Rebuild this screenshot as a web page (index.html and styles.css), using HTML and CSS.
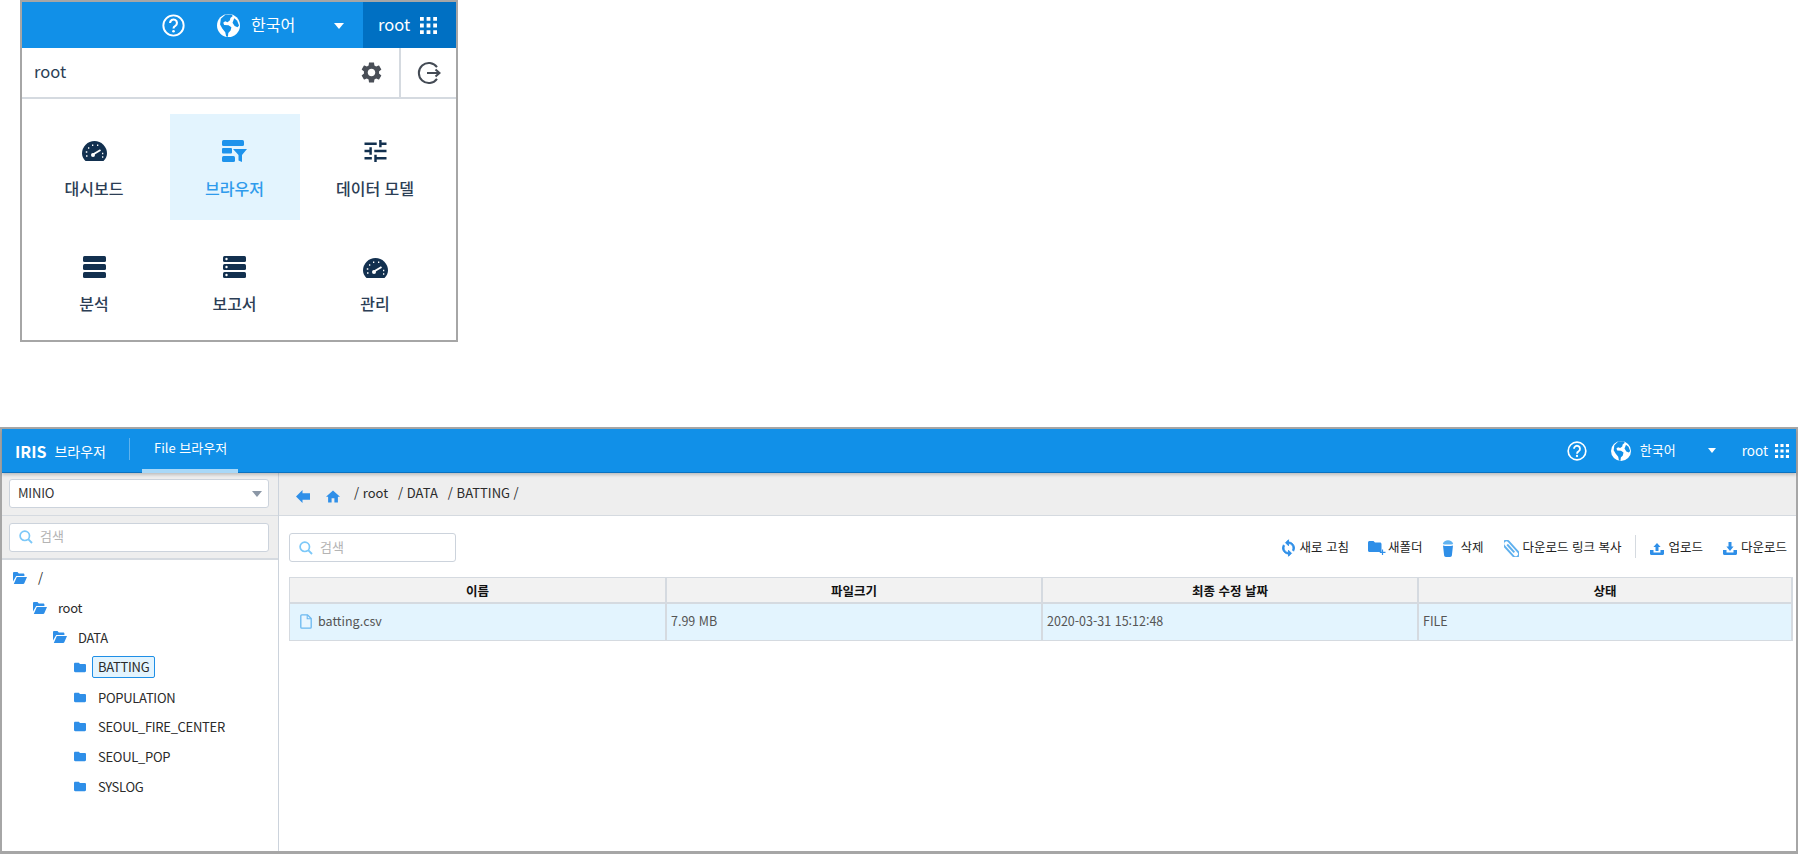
FILE: index.html
```html
<!DOCTYPE html>
<html lang="ko">

<head>
  <meta charset="UTF-8">
  <title>IRIS 브라우저</title>
  <link rel="stylesheet" href="styles.css">
</head>

<body>

  <svg class="icon-defs" aria-hidden="true">
    <symbol id="i-help" viewBox="0 0 24 24">
      <circle cx="12" cy="12" r="10.6" fill="none" stroke="#fff" stroke-width="2"/>
      <path d="M8.400 9.400a3.600 3.600 0 1 1 5.500 3c-1.300.7-1.900 1.400-1.900 2.800" fill="none" stroke="#fff" stroke-width="2.200"/>
      <circle cx="12" cy="18" r="1.400" fill="#fff"/>
    </symbol>
    <symbol id="i-globe" viewBox="0 0 24 24">
      <circle cx="12" cy="12" r="12" fill="#fff"/>
      <path d="M9 .4 15 .4l1.500 1.800-2.500 2-.5 2.300L11 8.500 8.500 7.500 6.500 9l1 2.500 4.500.3 3 2-.8 3.500-2.400 2.500-.4 4-1.800-.3-1-4.500L5.500 15 3.200 11 4 5z" fill="#1190e8"/>
      <path d="M18 4.500l3 2.500 2 5-1.600 1.800-3-1.300-2.200-3.500z" fill="#1190e8"/>
    </symbol>
    <symbol id="i-grid" viewBox="0 0 18 18">
      <path d="M0 0h4v4H0zM7 0h4v4H7zM14 0h4v4h-4zM0 7h4v4H0zM7 7h4v4H7zM14 7h4v4h-4zM0 14h4v4H0zM7 14h4v4H7zM14 14h4v4h-4z" fill="#fff"/>
    </symbol>
    <symbol id="i-gear" viewBox="2 2 20 20">
      <path d="M19.140 12.940c.04-.3.06-.61.06-.94 0-.32-.02-.64-.07-.94l2.030-1.580c.18-.14.23-.41.12-.61l-1.920-3.320c-.12-.22-.37-.29-.59-.22l-2.390.96c-.5-.38-1.030-.7-1.620-.94l-.36-2.540c-.04-.24-.24-.41-.48-.41h-3.840c-.24 0-.43.17-.47.41l-.36 2.540c-.59.24-1.130.57-1.620.94l-2.390-.96c-.22-.08-.47 0-.59.22L2.740 8.870c-.12.21-.08.47.12.61l2.030 1.580c-.05.3-.09.63-.09.94s.02.64.07.94l-2.030 1.580c-.18.14-.23.41-.12.61l1.920 3.320c.12.22.37.29.59.22l2.390-.96c.5.38 1.030.7 1.620.94l.36 2.540c.05.24.24.41.48.41h3.840c.24 0 .44-.17.47-.41l.36-2.540c.59-.24 1.130-.56 1.620-.94l2.390.96c.22.08.47 0 .59-.22l1.920-3.320c.12-.22.07-.47-.12-.61l-2.010-1.580zM12 15.600c-1.980 0-3.600-1.620-3.600-3.600s1.620-3.600 3.600-3.600 3.600 1.620 3.600 3.600-1.620 3.600-3.600 3.600z" fill="#4a4f57"/>
    </symbol>
    <symbol id="i-logout" viewBox="0 0 24 24">
      <path d="M20 6.200A10 10 0 1 0 20 17.800" fill="none" stroke="#444b55" stroke-width="2"/>
      <path d="M10 12h12.500M18.500 8.500l4 3.500-4 3.500" fill="none" stroke="#444b55" stroke-width="2"/>
    </symbol>
    <symbol id="i-gauge" viewBox="0 0 25 20">
      <path d="M3.500 20C1.300 17.800 0 15.300 0 12.500a12.500 12.500 0 0 1 25 0c0 2.800-1.300 5.300-3.500 7.500z" fill="#12304f"/>
      <path d="M11 13.500l7.500-4.500" stroke="#fff" stroke-width="2"/>
      <circle cx="11" cy="14" r="2" fill="#fff"/>
      <path d="M4 15h1.500M3.800 11h1.500M6 7h1.300M10 4.300h1.300M15 4.300h1.300M20 12.500h1.300M20 16h1.300" stroke="#fff" stroke-width="1.400"/>
    </symbol>
    <symbol id="i-browser" viewBox="0 0 25 23">
      <rect width="22" height="6" rx="1.500" fill="#1e93ec"/>
      <rect y="8" width="10" height="5.500" rx="1" fill="#1e93ec"/>
      <rect y="16" width="13" height="6" rx="1.500" fill="#1e93ec"/>
      <path d="M11 9h14l-5 6v7l-3.500-1.500V15z" fill="#1e93ec"/>
    </symbol>
    <symbol id="i-tune" viewBox="3 3 18 18">
      <path d="M3 17v2h6v-2H3zM3 5v2h10V5H3zm10 16v-2h8v-2h-8v-2h-2v6h2zM7 9v2H3v2h4v2h2V9H7zm14 4v-2H11v2h10zm-6-4h2V7h4V5h-4V3h-2v6z" fill="#12304f"/>
    </symbol>
    <symbol id="i-stack" viewBox="0 0 23 22">
      <rect width="23" height="6" rx="1.500" fill="#12304f"/>
      <rect y="8" width="23" height="6" rx="1.500" fill="#12304f"/>
      <rect y="16" width="23" height="6" rx="1.500" fill="#12304f"/>
    </symbol>
    <symbol id="i-server" viewBox="0 0 23 22">
      <rect width="23" height="6" rx="1.500" fill="#12304f"/>
      <rect y="8" width="23" height="6" rx="1.500" fill="#12304f"/>
      <rect y="16" width="23" height="6" rx="1.500" fill="#12304f"/>
      <circle cx="3.500" cy="3" r="1.200" fill="#fff"/>
      <circle cx="3.500" cy="11" r="1.200" fill="#fff"/>
      <circle cx="3.500" cy="19" r="1.200" fill="#fff"/>
    </symbol>
    <symbol id="i-search" viewBox="0 0 14 14">
      <circle cx="5.800" cy="5.800" r="4.700" fill="none" stroke="#7cc8f8" stroke-width="1.700"/>
      <path d="M9.200 9.200L13 13" stroke="#7cc8f8" stroke-width="1.900"/>
    </symbol>
    <symbol id="i-folder" viewBox="2 4 20 16">
      <path d="M10 4H4c-1.100 0-2 .9-2 2v12c0 1.100.9 2 2 2h16c1.100 0 2-.9 2-2V8c0-1.100-.9-2-2-2h-8l-2-2z" fill="#2f8fe8"/>
    </symbol>
    <symbol id="i-folder-open" viewBox="0 0 14 12">
      <path d="M0 1.200C0 .5.500 0 1.200 0h3.300l1.300 1.500h4.500c.6 0 1.100.5 1.100 1.100V4H3.200L0 9.500z" fill="#2f8fe8"/>
      <path d="M3.800 5H14l-2.700 6.200c-.2.5-.6.8-1.100.8H.8z" fill="#2f8fe8"/>
    </symbol>
    <symbol id="i-back" viewBox="0 0 14 13">
      <path d="M0 6.500L6.500 0v3.300H14v6.400H6.500V13z" fill="#2f8fe8"/>
    </symbol>
    <symbol id="i-home" viewBox="2 3 20 17">
      <path d="M10 20v-6h4v6h5v-8h3L12 3 2 12h3v8z" fill="#2f8fe8"/>
    </symbol>
    <symbol id="i-file" viewBox="0 0 12 15">
      <path d="M.8 1.800C.8 1.200 1.200.8 1.800.8h5.700l3.700 3.700v8.700c0 .6-.4 1-1 1H1.800c-.6 0-1-.4-1-1z" fill="#e9f6ff" stroke="#6bb8f0" stroke-width="1.300"/>
      <path d="M7.200 1v3.800H11" fill="none" stroke="#6bb8f0" stroke-width="1.100"/>
    </symbol>
    <symbol id="i-refresh" viewBox="3 0 18 24">
      <path d="M12 4V1L8 5l4 4V6c3.310 0 6 2.690 6 6 0 1.010-.25 1.970-.7 2.800l1.460 1.460C19.540 15.030 20 13.570 20 12c0-4.420-3.580-8-8-8zm0 14c-3.310 0-6-2.690-6-6 0-1.010.25-1.970.7-2.800L5.240 7.740C4.460 8.970 4 10.430 4 12c0 4.420 3.580 8 8 8v3l4-4-4-4v3z" fill="#2f8fe8" stroke="#2f8fe8" stroke-width="1.200"/>
    </symbol>
    <symbol id="i-newfolder" viewBox="0 0 18 14">
      <path d="M0 1.500C0 .7.700 0 1.500 0h4l1.500 1.600h5c.8 0 1.500.7 1.500 1.500V11H1.500C.7 11 0 10.300 0 9.500z" fill="#2f8fe8"/>
      <path d="M14.500 8.500v5.500M11.800 11.300h5.700" stroke="#2f8fe8" stroke-width="1.200"/>
    </symbol>
    <symbol id="i-trash" viewBox="0 0 12 17">
      <path d="M.8 4C1.500 1.500 3.500.3 6 .3s4.500 1.200 5.200 3.700c-1.500.8-9 .8-10.400 0z" fill="#62b3f0"/>
      <path d="M1 5.500c2 .7 8 .7 10 0l-1.100 9.800c-.1 1-.8 1.700-1.800 1.700H3.900c-1 0-1.700-.7-1.800-1.700z" fill="#2f8fe8"/>
    </symbol>
    <symbol id="i-clip" viewBox="0 0 14 16">
      <g fill="none" stroke="#5fb0ee" stroke-width="1.800" transform="rotate(-42 7 8)">
        <rect x="3.500" y="-1.500" width="6" height="19" rx="3"/>
        <path d="M6.500 2.500v10"/>
      </g>
    </symbol>
    <symbol id="i-upload" viewBox="0 0 14 13">
      <path d="M0 8h3.500v2.500h7V8H14v3.800c0 .7-.5 1.200-1.200 1.200H1.200C.5 13 0 12.500 0 11.800z" fill="#2f8fe8"/>
      <path d="M7 1l3.600 4H8.500v4h-3V5H3.400z" fill="#2f8fe8"/>
    </symbol>
    <symbol id="i-download" viewBox="0 0 14 13">
      <path d="M0 8h3.500v2.500h7V8H14v3.800c0 .7-.5 1.200-1.200 1.200H1.200C.5 13 0 12.500 0 11.800z" fill="#2f8fe8"/>
      <path d="M5.500 0h3v4.500h2.100L7 9 3.400 4.500h2.100z" fill="#2f8fe8"/>
    </symbol>
  </svg>

  <!-- user menu -->
  <div class="menu-card">
    <div class="menu-topbar">
      <svg class="top-help"><use href="#i-help"/></svg>
      <svg class="top-globe"><use href="#i-globe"/></svg>
      <span class="top-lang">한국어</span>
      <span class="caret caret-top"></span>
      <div class="top-user">
        <span>root</span>
        <svg class="top-grid"><use href="#i-grid"/></svg>
      </div>
    </div>
    <div class="user-row">
      <span class="user-name">root</span>
      <div class="user-gear"><svg class="gear-icon"><use href="#i-gear"/></svg></div>
      <div class="user-logout"><svg class="logout-icon"><use href="#i-logout"/></svg></div>
    </div>
    <div class="menu-grid">
      <div class="menu-item">
        <svg class="menu-icon gauge"><use href="#i-gauge"/></svg>
        <span>대시보드</span>
      </div>
      <div class="menu-item active">
        <svg class="menu-icon"><use href="#i-browser"/></svg>
        <span>브라우저</span>
      </div>
      <div class="menu-item">
        <svg class="menu-icon"><use href="#i-tune"/></svg>
        <span>데이터 모델</span>
      </div>
      <div class="menu-item lower">
        <svg class="menu-icon"><use href="#i-stack"/></svg>
        <span>분석</span>
      </div>
      <div class="menu-item lower">
        <svg class="menu-icon"><use href="#i-server"/></svg>
        <span>보고서</span>
      </div>
      <div class="menu-item lower">
        <svg class="menu-icon gauge"><use href="#i-gauge"/></svg>
        <span>관리</span>
      </div>
    </div>
  </div>

  <!-- file browser -->
  <div class="browser">
    <div class="nav">
      <span class="nav-logo">IRIS</span>
      <span class="nav-title">브라우저</span>
      <div class="nav-tab">File 브라우저</div>
      <div class="nav-right">
        <svg class="nav-help"><use href="#i-help"/></svg>
        <svg class="nav-globe"><use href="#i-globe"/></svg>
        <span class="nav-lang">한국어</span>
        <span class="caret caret-nav"></span>
        <span class="nav-user">root</span>
        <svg class="nav-grid"><use href="#i-grid"/></svg>
      </div>
    </div>

    <div class="browser-body">
      <div class="sidebar">
        <div class="side-box side-select">
          <div class="select">
            <span>MINIO</span>
            <span class="caret caret-select"></span>
          </div>
        </div>
        <div class="side-box side-search">
          <div class="search">
            <svg class="search-icon"><use href="#i-search"/></svg>
            <span>검색</span>
          </div>
        </div>
        <ul class="tree">
          <li class="lv0"><svg class="folder-open"><use href="#i-folder-open"/></svg><span>/</span></li>
          <li class="lv1"><svg class="folder-open"><use href="#i-folder-open"/></svg><span>root</span></li>
          <li class="lv2"><svg class="folder-open"><use href="#i-folder-open"/></svg><span>DATA</span></li>
          <li class="lv3"><svg class="folder"><use href="#i-folder"/></svg><span class="tree-selected">BATTING</span></li>
          <li class="lv3"><svg class="folder"><use href="#i-folder"/></svg><span>POPULATION</span></li>
          <li class="lv3"><svg class="folder"><use href="#i-folder"/></svg><span>SEOUL_FIRE_CENTER</span></li>
          <li class="lv3"><svg class="folder"><use href="#i-folder"/></svg><span>SEOUL_POP</span></li>
          <li class="lv3"><svg class="folder"><use href="#i-folder"/></svg><span>SYSLOG</span></li>
        </ul>
      </div>

      <div class="content">
        <div class="crumbs">
          <svg class="crumb-back"><use href="#i-back"/></svg>
          <svg class="crumb-home"><use href="#i-home"/></svg>
          <span class="crumb-part first">/ root</span>
          <span class="crumb-part">/ DATA</span>
          <span class="crumb-part">/ BATTING /</span>
        </div>

        <div class="content-main">
          <div class="toolbar">
            <div class="search search-main">
              <svg class="search-icon"><use href="#i-search"/></svg>
              <span>검색</span>
            </div>
            <div class="actions">
              <span class="action"><svg class="act-refresh"><use href="#i-refresh"/></svg>새로 고침</span>
              <span class="action action-folder"><svg class="act-newfolder"><use href="#i-newfolder"/></svg>새폴더</span>
              <span class="action action-trash"><svg class="act-trash"><use href="#i-trash"/></svg>삭제</span>
              <span class="action action-clip"><svg class="act-clip"><use href="#i-clip"/></svg>다운로드 링크 복사</span>
              <span class="action-sep"></span>
              <span class="action"><svg class="act-load"><use href="#i-upload"/></svg>업로드</span>
              <span class="action action-down"><svg class="act-load"><use href="#i-download"/></svg>다운로드</span>
            </div>
          </div>

          <div class="file-table">
            <div class="cell head">이름</div>
            <div class="cell head">파일크기</div>
            <div class="cell head">최종 수정 날짜</div>
            <div class="cell head">상태</div>
            <div class="cell row"><svg class="file-icon"><use href="#i-file"/></svg>batting.csv</div>
            <div class="cell row">7.99 MB</div>
            <div class="cell row">2020-03-31 15:12:48</div>
            <div class="cell row">FILE</div>
          </div>
        </div>
      </div>
    </div>
  </div>

</body>

</html>
```

FILE: styles.css
```css
html,
body {
  margin: 0;
  padding: 0;
  height: 854px;
  overflow: hidden;
  background-color: #fff;
}

body {
  font-family: "Noto Sans CJK KR", "Noto Sans", sans-serif;
  font-size: 13px;
  color: #2b2b2b;
}

.icon-defs {
  display: none;
}

svg {
  display: block;
  flex-shrink: 0;
}

.caret {
  width: 0;
  height: 0;
  border-left: 6px solid transparent;
  border-right: 6px solid transparent;
  border-top: 7px solid #fff;
}

/* user menu */
.menu-card {
  box-sizing: border-box;
  width: 438px;
  height: 342px;
  margin-left: 20px;
  border: 2px solid #a6a6a6;
  background-color: #fff;
}

.menu-topbar {
  display: flex;
  align-items: center;
  height: 46px;
  background-color: #1190e8;
  color: #fff;
}

.top-help {
  width: 23px;
  height: 23px;
  margin-left: 140px;
}

.top-globe {
  width: 23px;
  height: 23px;
  margin-left: 32px;
}

.top-lang {
  width: 44px;
  margin-left: 11px;
  font-size: 16px;
  line-height: 20px;
  margin-top: -3px;
  white-space: nowrap;
}

.caret-top {
  margin-left: 39px;
  margin-top: 2px;
  border-left-width: 5.500px;
  border-right-width: 5.500px;
  border-top-width: 6px;
}

.top-user {
  display: flex;
  align-items: center;
  align-self: stretch;
  margin-left: auto;
  width: 93px;
  background-color: #0070c3;
  font-size: 16.500px;
}

.top-user span {
  margin-left: 15px;
  margin-top: -2px;
}

.top-grid {
  width: 17px;
  height: 17px;
  margin-left: 10px;
}

.user-row {
  display: flex;
  align-items: stretch;
  height: 49px;
  border-bottom: 2px solid #d5dae0;
}

.user-name {
  margin-left: 12px;
  font-size: 16.500px;
  line-height: 46px;
  color: #2c3e55;
}

.user-gear {
  display: flex;
  align-items: center;
  margin-left: auto;
  padding-right: 17px;
  border-right: 2px solid #d5dae0;
}

.gear-icon {
  width: 21px;
  height: 21px;
}

.logout-icon {
  width: 24px;
  height: 24px;
}

.user-logout {
  display: flex;
  align-items: center;
  width: 55px;
  padding-left: 16px;
  box-sizing: border-box;
}

.menu-grid {
  display: grid;
  grid-template-columns: repeat(3, 130px);
  grid-auto-rows: 106px;
  column-gap: 10.500px;
  row-gap: 9px;
  padding: 15px 0 0 7px;
}

.menu-item {
  display: flex;
  flex-direction: column;
  align-items: center;
  padding-top: 26px;
  box-sizing: border-box;
  font-size: 16px;
  font-weight: 500;
  line-height: 24px;
  color: #2c3e55;
}

.menu-item.active {
  background-color: #e3f4fe;
  color: #2f9bec;
}

.menu-icon {
  width: 23px;
  height: 22px;
  margin-bottom: 14px;
}

.menu-item.active .menu-icon {
  width: 25px;
  height: 23px;
  margin-bottom: 13px;
}

.menu-icon.gauge {
  width: 25px;
  height: 20px;
  margin-top: 1px;
  margin-bottom: 15px;
}

.menu-item.lower {
  padding-top: 27px;
}

.menu-item.lower .menu-icon {
  margin-bottom: 13px;
}

.menu-item.lower .menu-icon.gauge {
  margin-top: 2px;
  margin-bottom: 13px;
}

/* file browser */
.browser {
  box-sizing: border-box;
  width: 1798px;
  height: 427px;
  margin-top: 85px;
  border: 2px solid #a6a6a6;
  border-bottom-width: 3px;
  background-color: #fff;
  display: flex;
  flex-direction: column;
}

.nav {
  position: relative;
  display: flex;
  align-items: center;
  flex-shrink: 0;
  height: 44px;
  box-sizing: border-box;
  background-color: #1190e8;
  color: #fff;
  border-bottom: 1px solid #0b72c0;
  box-shadow: 0 2px 3px rgba(0, 0, 0, 0.2);
}

.nav-logo {
  margin-left: 13px;
  font-size: 16px;
  font-weight: 700;
}

.nav-title {
  margin-left: 8px;
  font-size: 14px;
}

.nav-tab {
  display: flex;
  align-items: center;
  align-self: stretch;
  height: 44px;
  box-sizing: border-box;
  margin-left: 36px;
  padding: 0 11px 3px 12px;
  border-bottom: 4px solid #a8d8f8;
  font-size: 13px;
  position: relative;
}

.nav-tab::before {
  content: "";
  position: absolute;
  left: -13px;
  top: 9px;
  height: 22px;
  width: 1px;
  background-color: #5fb3ee;
}

.nav-right {
  display: flex;
  align-items: center;
  margin-left: auto;
}

.nav-help {
  width: 20px;
  height: 20px;
}

.nav-globe {
  width: 20px;
  height: 20px;
  margin-left: 24px;
}

.nav-lang {
  margin-left: 9px;
  margin-top: -3px;
  font-size: 13px;
}

.caret-nav {
  margin-left: 32px;
  border-left-width: 4.500px;
  border-right-width: 4.500px;
  border-top-width: 5px;
}

.nav-user {
  margin-left: 26px;
  margin-top: -2px;
  font-size: 13.500px;
}

.nav-grid {
  width: 14px;
  height: 14px;
  margin-left: 7px;
  margin-right: 7px;
}

.browser-body {
  display: flex;
  flex: 1;
  min-height: 0;
}

.sidebar {
  width: 276px;
  flex-shrink: 0;
  border-right: 1px solid #ccd3dc;
}

.side-box {
  background-color: #eee;
  padding: 0 9px 0 7px;
  display: flex;
  align-items: center;
}

.side-select {
  height: 43px;
  box-sizing: border-box;
  align-items: flex-start;
  padding-top: 6px;
  border-bottom: 1px solid #d5dae0;
}

.side-search {
  height: 42px;
  border-bottom: 2px solid #d5dae0;
}

.select {
  display: flex;
  align-items: center;
  justify-content: space-between;
  box-sizing: border-box;
  width: 260px;
  height: 29px;
  padding: 0 6px 0 8px;
  background-color: #fff;
  border: 1px solid #ccd3dc;
  border-radius: 3px;
  font-size: 13px;
  color: #333;
}

.select span:first-child {
  margin-top: -2px;
  letter-spacing: -0.2px;
}

.caret-select {
  border-left-width: 5px;
  border-right-width: 5px;
  border-top: 6px solid #8b97a6;
}

.search {
  display: flex;
  align-items: center;
  box-sizing: border-box;
  width: 260px;
  height: 29px;
  padding-left: 9px;
  background-color: #fff;
  border: 1px solid #ccd3dc;
  border-radius: 3px;
  font-size: 13px;
  color: #b4b4b4;
}

.search span {
  margin-left: 7px;
  margin-top: -3px;
}

.search-icon {
  width: 14px;
  height: 14px;
}

.tree {
  list-style: none;
  margin: 0;
  padding: 3px 0 0;
  font-size: 13px;
  letter-spacing: -0.3px;
  color: #2b2b2b;
}

.tree li {
  display: flex;
  align-items: center;
  height: 29.800px;
}

.lv0 {
  padding-left: 11px;
}

.lv1 {
  padding-left: 31px;
}

.lv2 {
  padding-left: 51px;
}

.lv3 {
  padding-left: 72px;
}

.folder-open {
  width: 14px;
  height: 12px;
  margin-right: 11px;
}

.folder {
  width: 12px;
  height: 11px;
  margin-right: 12px;
}

.tree-selected {
  box-sizing: border-box;
  margin-left: -6px;
  padding: 0 5px;
  height: 22px;
  line-height: 19px;
  background-color: #e3f4fe;
  border: 1px solid #1f8fe6;
  border-radius: 2px;
}

.content {
  flex: 1;
  min-width: 0;
  display: flex;
  flex-direction: column;
}

.crumbs {
  display: flex;
  align-items: center;
  height: 43px;
  box-sizing: border-box;
  flex-shrink: 0;
  background-color: #eee;
  border-bottom: 1px solid #d5dae0;
  padding-left: 17px;
  font-size: 13px;
  color: #2b2b2b;
}

.crumb-back {
  width: 14px;
  height: 13px;
  margin-top: 5px;
}

.crumb-home {
  width: 14px;
  height: 13px;
  margin-left: 16px;
  margin-top: 5px;
}

.crumb-part {
  margin-left: 10px;
  margin-top: -3px;
  white-space: nowrap;
}

.crumb-part.first {
  margin-left: 14px;
}

.content-main {
  padding: 17px 3px 0 10px;
}

.toolbar {
  display: flex;
  align-items: center;
  justify-content: space-between;
  height: 29px;
}

.search-main {
  width: 167px;
}

.actions {
  display: flex;
  align-items: center;
  margin-top: -2px;
  padding-right: 6px;
  font-size: 12.500px;
  color: #222;
}

.action {
  display: flex;
  align-items: center;
  white-space: nowrap;
}

.action svg {
  margin-right: 3px;
  margin-top: 3px;
}

.action + .action-folder {
  margin-left: 19px;
}

.action + .action-trash {
  margin-left: 20px;
}

.action + .action-clip {
  margin-left: 21px;
}

.action + .action-down {
  margin-left: 20px;
}

.action-sep {
  width: 1px;
  height: 23px;
  margin: 0 14px 0 14px;
  background-color: #d5dae0;
}

.act-refresh {
  width: 15px;
  height: 18px;
}

.act-newfolder {
  width: 18px;
  height: 14px;
  margin-right: 2px !important;
}

.act-trash {
  width: 12px;
  height: 17px;
  margin-right: 6px !important;
}

.act-clip {
  width: 15px;
  height: 17px;
}

.act-load {
  width: 14px;
  height: 13px;
  margin-right: 4px !important;
}

.file-table {
  display: grid;
  grid-template-columns: 377px 376px 376px 1fr;
  width: 1504px;
  box-sizing: border-box;
  margin-top: 15px;
  border: 1px solid #d5dae0;
  border-right-width: 2px;
}

.cell {
  box-sizing: border-box;
  display: flex;
  align-items: center;
  border-right: 2px solid #d5dae0;
}

.cell:nth-child(4n) {
  border-right: none;
}

.head {
  justify-content: center;
  height: 26px;
  background-color: #f2f2f2;
  border-bottom: 2px solid #d5dae0;
  font-size: 12.500px;
  font-weight: 700;
  color: #111;
}

.row {
  height: 36px;
  padding: 0 0 3px 4px;
  background-color: #e3f4fe;
  font-size: 12.500px;
  color: #555;
}

.file-icon {
  width: 12px;
  height: 15px;
  margin: 2px 6px 0 6px;
}
```
